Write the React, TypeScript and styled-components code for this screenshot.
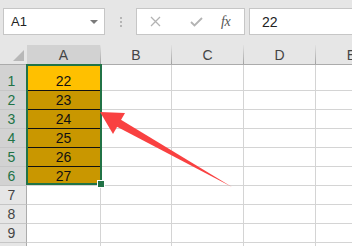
import React from "react";
import styled, { createGlobalStyle } from "styled-components";

const GlobalStyle = createGlobalStyle`
    html, body {
        margin: 0;
        padding: 0;
        background: #fff;
    }
    body {
        font-family: "Liberation Sans", Arial, sans-serif;
    }
`;

const COLUMNS = [
    { name: "A", width: 74 },
    { name: "B", width: 71 },
    { name: "C", width: 72 },
    { name: "D", width: 72 },
    { name: "E", width: 72 },
];

const VALUES = [22, 23, 24, 25, 26, 27];
const ROW_COUNT = 10;

export default function App() {
    return (
        <Screen>
            <GlobalStyle />
            <Toolbar>
                <NameBox>
                    <span>A1</span>
                    <DropArrow />
                </NameBox>
                <Grip>
                    <i />
                    <i />
                    <i />
                </Grip>
                <FuncBox>
                    <CancelIcon width="11" height="11" viewBox="0 0 11 11">
                        <path d="M1 1 L10 10 M10 1 L1 10" stroke="#b3b3b3" strokeWidth="1.3" fill="none" />
                    </CancelIcon>
                    <EnterIcon width="13" height="10" viewBox="0 0 13 10">
                        <path d="M1 5 L4.5 8.5 L12 1" stroke="#b3b3b3" strokeWidth="1.8" fill="none" />
                    </EnterIcon>
                    <Fx>fx</Fx>
                </FuncBox>
                <FormulaBox>22</FormulaBox>
            </Toolbar>

            <Sheet>
                <HeaderRow>
                    <Corner>
                        <svg width="11" height="11" viewBox="0 0 11 11">
                            <path d="M11 0 L11 11 L0 11 Z" fill="#b8b8b8" />
                        </svg>
                    </Corner>
                    {COLUMNS.map(col => (
                        <ColHeader key={col.name} $width={col.width} $active={col.name === "A"}>
                            {col.name}
                        </ColHeader>
                    ))}
                </HeaderRow>

                {Array.from({ length: ROW_COUNT }, (_, r) => {
                    const filled = r < VALUES.length;
                    return (
                        <Row key={r} $tall={r === 0}>
                            <RowHeader $active={filled}>{r + 1}</RowHeader>
                            {COLUMNS.map((col, c) => (
                                <Cell
                                    key={col.name}
                                    $width={col.width}
                                    $fill={c === 0 && filled ? (r === 0 ? "#ffc000" : "#c99700") : undefined}
                                    $dark={c === 0 && r < VALUES.length - 1}
                                >
                                    {c === 0 && filled ? VALUES[r] : ""}
                                </Cell>
                            ))}
                        </Row>
                    );
                })}

                <Selection>
                    <Handle />
                </Selection>

                <ArrowLayer width="352" height="201" viewBox="0 45 352 201">
                    <polygon points="120.5,119.5 232,187 116.5,126.5" fill="#f94141" />
                    <polygon points="100,112 125,113 113,134" fill="#f94141" />
                </ArrowLayer>
            </Sheet>
        </Screen>
    );
}

const Screen = styled.div`
    width: 352px;
    height: 246px;
    overflow: hidden;
    background: #fff;
`;

const Toolbar = styled.div`
    display: flex;
    align-items: flex-start;
    height: 45px;
    box-sizing: border-box;
    padding: 8px 0 0 3px;
    background: #e6e6e6;
`;

const NameBox = styled.div`
    width: 102px;
    height: 27px;
    box-sizing: border-box;
    display: flex;
    align-items: center;
    justify-content: space-between;
    padding: 0 6px 0 7px;
    background: #fff;
    border: 1px solid #c6c6c6;
    font-size: 13px;
    color: #222;
`;

const DropArrow = styled.span`
    width: 0;
    height: 0;
    border-left: 4px solid transparent;
    border-right: 4px solid transparent;
    border-top: 4px solid #7a7a7a;
`;

const Grip = styled.div`
    width: 31px;
    height: 27px;
    display: flex;
    flex-direction: column;
    align-items: center;
    justify-content: center;
    gap: 2px;

    i {
        width: 2px;
        height: 2px;
        background: #b5b5b5;
    }
`;

const FuncBox = styled.div`
    width: 109px;
    height: 27px;
    box-sizing: border-box;
    display: flex;
    align-items: center;
    background: #fff;
    border: 1px solid #c6c6c6;
`;

const CancelIcon = styled.svg`
    margin-left: 13px;
`;

const EnterIcon = styled.svg`
    margin-left: 29px;
`;

const Fx = styled.span`
    margin-left: 18px;
    font: italic 14px "Liberation Serif", serif;
    color: #555;
    letter-spacing: -0.5px;
`;

const FormulaBox = styled.div`
    flex: 1;
    height: 27px;
    box-sizing: border-box;
    margin-left: 4px;
    margin-right: -2px;
    display: flex;
    align-items: center;
    padding-left: 12px;
    background: #fff;
    border: 1px solid #c6c6c6;
    font-size: 14px;
    color: #222;
`;

const Sheet = styled.div`
    position: relative;
    font-size: 14px;
`;

const HeaderRow = styled.div`
    display: flex;
    height: 20px;
    box-sizing: border-box;
    border-bottom: 1px solid #ababab;
    background: #e6e6e6;
`;

const Corner = styled.div`
    width: 27px;
    flex: none;
    display: flex;
    align-items: flex-end;
    justify-content: flex-end;
    padding: 0 3px 3px 0;
    box-sizing: border-box;
`;

const ColHeader = styled.div<{ $width: number; $active?: boolean }>`
    width: ${p => p.$width}px;
    flex: none;
    box-sizing: border-box;
    display: flex;
    align-items: center;
    justify-content: center;
    background: ${p => (p.$active ? "#d2d2d2" : "#e6e6e6")};
    color: #444;
    border-right: 1px solid;
    border-image: linear-gradient(to bottom, #e6e6e6, #9e9e9e) 1;
`;

const Row = styled.div<{ $tall?: boolean }>`
    display: flex;
    height: ${p => (p.$tall ? 26 : 19)}px;
`;

const RowHeader = styled.div<{ $active?: boolean }>`
    width: 27px;
    flex: none;
    box-sizing: border-box;
    display: flex;
    align-items: flex-end;
    justify-content: center;
    padding-bottom: 1px;
    padding-right: 3px;
    background: ${p => (p.$active ? "#d2d2d2" : "#e6e6e6")};
    color: ${p => (p.$active ? "#217346" : "#444")};
    border-right: 1px solid #ababab;
    border-bottom: 1px solid #c6c6c6;
`;

const Cell = styled.div<{ $width: number; $fill?: string; $dark?: boolean }>`
    width: ${p => p.$width}px;
    flex: none;
    box-sizing: border-box;
    display: flex;
    align-items: flex-end;
    justify-content: center;
    padding-bottom: 1px;
    background: ${p => p.$fill || "#fff"};
    color: #111;
    border-right: 1px solid #d4d4d4;
    border-bottom: 1px solid ${p => (p.$dark ? "#111" : "#d4d4d4")};
`;

const Selection = styled.div`
    position: absolute;
    left: 26px;
    top: 19px;
    width: 76px;
    height: 121px;
    box-sizing: border-box;
    border: 2px solid #217346;
    pointer-events: none;
`;

const Handle = styled.span`
    position: absolute;
    right: -5px;
    bottom: -5px;
    width: 6px;
    height: 6px;
    background: #217346;
    border: 1px solid #fff;
`;

const ArrowLayer = styled.svg`
    position: absolute;
    left: 0;
    top: 0;
    pointer-events: none;
`;
